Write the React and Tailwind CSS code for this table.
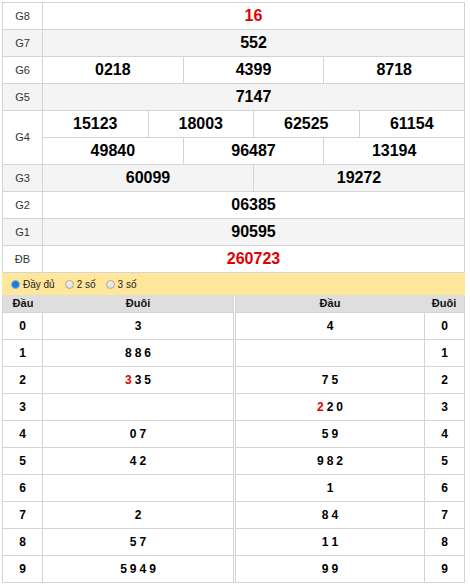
import React from "react";

const prizes = [
  { label: "G8", rows: [["16"]], red: true },
  { label: "G7", rows: [["552"]] },
  { label: "G6", rows: [["0218", "4399", "8718"]] },
  { label: "G5", rows: [["7147"]] },
  { label: "G4", rows: [["15123", "18003", "62525", "61154"], ["49840", "96487", "13194"]] },
  { label: "G3", rows: [["60099", "19272"]] },
  { label: "G2", rows: [["06385"]] },
  { label: "G1", rows: [["90595"]] },
  { label: "ĐB", rows: [["260723"]], red: true },
];

// each digit: [value, isRed]
const heads = [
  [["3"]],
  [["8"], ["8"], ["6"]],
  [["3", true], ["3"], ["5"]],
  [],
  [["0"], ["7"]],
  [["4"], ["2"]],
  [],
  [["2"]],
  [["5"], ["7"]],
  [["5"], ["9"], ["4"], ["9"]],
];

const tails = [
  [["4"]],
  [],
  [["7"], ["5"]],
  [["2", true], ["2"], ["0"]],
  [["5"], ["9"]],
  [["9"], ["8"], ["2"]],
  [["1"]],
  [["8"], ["4"]],
  [["1"], ["1"]],
  [["9"], ["9"]],
];

function Digits({ list }) {
  return (
    <span className="flex gap-[3px]">
      {list.map(([d, red], k) => (
        <span key={k} className={red ? "text-[#e10000]" : "text-black"}>{d}</span>
      ))}
    </span>
  );
}

function Radio({ checked, label }) {
  return (
    <label className="flex items-center gap-[3px]">
      {checked
        ? <span className="w-[9px] h-[9px] rounded-full bg-[#1e7bd9] border border-[#7fb2e8]" />
        : <span className="w-[9px] h-[9px] rounded-full bg-gradient-to-b from-[#f0f0f0] to-[#dcdcdc] border border-[#a8a8a8]" />}
      <span>{label}</span>
    </label>
  );
}

export default function App() {
  return (
    <div className="w-[470px] h-[585px] bg-white pl-[2px] pt-[2px] font-['Liberation_Sans',Arial,sans-serif]">
      <div className="w-[463px] border-l border-t border-r border-[#d4d4d4]">
        {prizes.map((p, i) => (
          <div key={p.label} className={`flex ${i % 2 ? "bg-[#f4f4f4]" : "bg-white"}`}>
            <div className="w-[40px] shrink-0 border-r border-b border-[#d4d4d4] flex items-center justify-center text-[11px] text-[#333]">
              {p.label}
            </div>
            <div className="flex-1 flex flex-col">
              {p.rows.map((r, j) => (
                <div key={j} className="flex h-[27px] border-b border-[#d4d4d4]">
                  {r.map((n, k) => (
                    <div
                      key={n}
                      className={`flex-1 flex items-center justify-center text-[16px] font-bold ${k ? "border-l border-[#d4d4d4]" : ""} ${p.red ? "text-[#e10000]" : "text-black"}`}
                    >
                      {n}
                    </div>
                  ))}
                </div>
              ))}
            </div>
          </div>
        ))}
      </div>

      <div className="w-[463px] h-[22px] bg-[#fee69a] flex items-center gap-[10px] pl-[9px] text-[10px] text-[#222]">
        <Radio checked label="Đầy đủ" />
        <Radio label="2 số" />
        <Radio label="3 số" />
      </div>

      <div className="w-[463px] flex gap-[1px]">
        <div className="w-[232px] border-l border-r border-[#d4d4d4]">
          <div className="flex h-[18px] bg-[#dedede] border-b border-[#d4d4d4] text-[11px] font-bold text-[#111]">
            <div className="w-[40px] flex items-center justify-center">Đầu</div>
            <div className="flex-1 flex items-center justify-center">Đuôi</div>
          </div>
          {heads.map((h, i) => (
            <div key={i} className="flex h-[27px] border-b border-[#d4d4d4] text-[12px] font-bold">
              <div className="w-[40px] border-r border-[#d4d4d4] flex items-center justify-center">{i}</div>
              <div className="flex-1 flex items-center justify-center"><Digits list={h} /></div>
            </div>
          ))}
        </div>
        <div className="w-[230px] border-l border-r border-[#d4d4d4]">
          <div className="flex h-[18px] bg-[#dedede] border-b border-[#d4d4d4] text-[11px] font-bold text-[#111]">
            <div className="flex-1 flex items-center justify-center">Đầu</div>
            <div className="w-[40px] flex items-center justify-center">Đuôi</div>
          </div>
          {tails.map((t, i) => (
            <div key={i} className="flex h-[27px] border-b border-[#d4d4d4] text-[12px] font-bold">
              <div className="flex-1 border-r border-[#d4d4d4] flex items-center justify-center"><Digits list={t} /></div>
              <div className="w-[39px] flex items-center justify-center">{i}</div>
            </div>
          ))}
        </div>
      </div>
    </div>
  );
}
